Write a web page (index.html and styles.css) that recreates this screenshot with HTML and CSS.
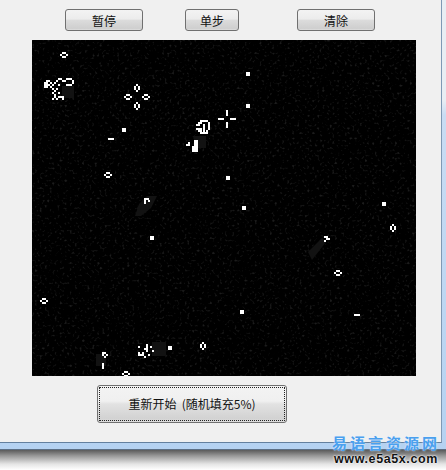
FILE: index.html
```html
<!DOCTYPE html>
<html lang="zh">
<head>
<meta charset="utf-8">
<title>生命游戏</title>
<link rel="stylesheet" href="styles.css">
</head>
<body>
<div class="frame">
  <main class="client">
    <div class="toolbar">
      <button class="btn btn-wide">暂停</button>
      <button class="btn btn-narrow">单步</button>
      <button class="btn btn-wide">清除</button>
    </div>
    <svg class="field" viewBox="32 40 384 336" width="384" height="336" xmlns="http://www.w3.org/2000/svg">
      <defs>
        <filter id="specks" x="0" y="0" width="100%" height="100%" color-interpolation-filters="sRGB">
          <feTurbulence type="fractalNoise" baseFrequency="0.4" numOctaves="1" seed="7"/>
          <feColorMatrix type="matrix" values="0 0 0 0 0.11  0 0 0 0 0.11  0 0 0 0 0.11  5 0 0 0 -2.9"/>
        </filter>
        <path id="hive-h" d="M2 0h4v2h-4zM0 2h2v2h-2zM6 2h2v2h-2zM2 4h4v2h-4z"/>
        <path id="hive-v" d="M2 0h2v2h-2zM0 2h2v4h-2zM4 2h2v4h-2zM2 6h2v2h-2z"/>
        <rect id="block" width="4" height="4"/>
      </defs>
      <rect x="32" y="40" width="384" height="336" fill="#000"/>
      <rect x="32" y="40" width="384" height="336" filter="url(#specks)"/>
      <g fill="#121212">
        <path d="M62 86h12v12h-12z"/>
        <path d="M139 204l8-8h10l-6 12-10 8h-6z"/>
        <path d="M308 252l14-14 4 4-14 18z"/>
        <path d="M96 354h10v12h-10z"/>
        <path d="M152 342h14v14h-14z"/>
        <path d="M194 136h12v12h-12z"/>
      </g>
      <g fill="#fff">
        <use href="#block" x="246" y="72"/>
        <use href="#block" x="246" y="104"/>
        <use href="#block" x="122" y="128"/>
        <use href="#block" x="226" y="176"/>
        <use href="#block" x="242" y="206"/>
        <use href="#block" x="150" y="236"/>
        <use href="#block" x="382" y="202"/>
        <use href="#block" x="240" y="310"/>
        <use href="#block" x="168" y="346"/>
        <use href="#hive-h" x="60" y="52"/>
        <use href="#hive-h" x="104" y="172"/>
        <use href="#hive-h" x="334" y="270"/>
        <use href="#hive-h" x="40" y="298"/>
        <use href="#hive-h" x="122" y="371"/>
        <use href="#hive-h" x="124" y="94"/>
        <use href="#hive-h" x="142" y="94"/>
        <use href="#hive-v" x="134" y="84"/>
        <use href="#hive-v" x="134" y="102"/>
        <use href="#hive-v" x="390" y="224"/>
        <use href="#hive-v" x="200" y="342"/>
        <path d="M108 138h6v2h-6zM354 314h6v2h-6zM102 363h2v6h-2z"/>
        <path d="M218 118h6v2h-6zM230 118h6v2h-6zM226 110h2v6h-2zM226 122h2v6h-2z"/>
        <path d="M144 198h5v2h-3v4h-2zM148 200h2v2h-2z"/>
        <path d="M324 236h4v2h-4zM326 238h4v2h-4zM324 240h2v2h-2z"/>
        <path d="M102 352h4v2h-4zM102 354h2v2h-2zM106 354h2v2h-2zM104 356h2v2h-2z"/>
        <path d="M44 82h4v6h-4zM46 80h4v2h-4zM48 84h2v2h-2zM50 82h2v2h-2zM52 84h2v2h-2zM50 86h2v2h-2zM54 82h2v2h-2z"/>
        <path d="M58 78h4v2h-4zM56 80h2v2h-2zM62 80h2v2h-2zM58 84h2v2h-2zM66 78h6v2h-6zM64 80h2v2h-2zM72 80h2v4h-2zM66 84h6v2h-6z"/>
        <path d="M52 88h2v2h-2zM54 90h2v2h-2zM56 88h2v2h-2zM58 92h2v2h-2zM52 92h2v2h-2zM54 94h2v4h-2zM52 98h2v2h-2zM58 96h6v2h-6zM56 98h2v2h-2zM62 98h2v2h-2z"/>
        <path d="M138 352h2v4h-2zM140 354h2v2h-2zM142 352h2v4h-2zM138 346h2v2h-2zM146 344h2v8h-2zM150 346h2v2h-2zM152 350h2v2h-2zM148 354h2v2h-2zM144 348h2v2h-2zM144 356h2v2h-2z"/>
        <path d="M200 120h8v2h-8zM198 122h4v2h-4zM208 122h2v8h-2zM196 124h4v2h-4zM203 124h2v8h-2zM196 128h6v2h-6zM198 130h4v2h-4zM200 134h8v-2h-8zM206 130h2v2h-2z"/>
        <path d="M192 146h6v6h-6zM194 140h4v6h-4zM186 144h4v2h-4zM188 142h2v2h-2z"/>
      </g>
    </svg>
    <button class="btn btn-restart"><span class="focus">重新开始 &nbsp;(随机填充5%)</span></button>
  </main>
</div>
<div class="drop-shadow"></div>
<div class="watermark">
  <div class="wm-cn">易语言资源网</div>
  <div class="wm-url">www.e5a5x.com</div>
</div>
</body>
</html>
```
FILE: styles.css
```css
* { box-sizing: border-box; }
html, body { margin: 0; padding: 0; }
body {
  position: relative;
  width: 446px;
  height: 470px;
  overflow: hidden;
  background: #fff;
  font-family: "Noto Sans CJK SC", "Liberation Sans", sans-serif;
}
.frame {
  height: 450px;
  padding: 0 4px 6px 0;
  background: linear-gradient(180deg, #e9eef3 0, #e9eef3 100px, #c9dcf3 115px, #b5d2f1 100%);
  border-bottom: 1px solid #5d6f84;
}
.client {
  height: 443px;
  padding-top: 9px;
  display: flex;
  flex-direction: column;
  align-items: flex-start;
  background: #f0f0f0;
  border-right: 1px solid #7f99b5;
  border-bottom: 1px solid #64809e;
}
.toolbar {
  display: flex;
  margin-left: 65px;
  height: 22px;
}
.btn {
  display: block;
  padding: 1px 0 0;
  border: 1px solid #707070;
  border-radius: 3px;
  color: #111;
  font-family: inherit;
  font-size: 12px;
  line-height: 1;
  background: linear-gradient(180deg, #f3f3f3 0, #ececec 46%, #dcdcdc 50%, #cfcfcf 92%, #dedede 100%);
}
.btn-wide { width: 78px; }
.btn-narrow { width: 54px; margin: 0 58px 0 42px; }
.field {
  display: block;
  margin: 9px 0 0 32px;
}
.btn-restart {
  width: 190px;
  height: 38px;
  margin: 9px 0 0 97px;
  padding: 1px;
  background: linear-gradient(180deg, #f3f3f3 0, #f0f0f0 42%, #e2e2e2 50%, #d2d2d2 90%, #dedede 100%);
}
.focus {
  display: flex;
  align-items: center;
  justify-content: center;
  height: 100%;
  border: 1px dotted #222;
  white-space: pre;
}
.drop-shadow {
  height: 20px;
  background: linear-gradient(180deg, #5a5a5a 0, #9a9a9a 30%, #e4e4e4 70%, #fff 100%);
}
.watermark {
  position: absolute;
  left: 331px;
  top: 435px;
  width: 110px;
  text-align: center;
}
.wm-cn {
  font-family: "Liberation Sans", "Noto Sans CJK SC", sans-serif;
  font-size: 15px;
  line-height: 17px;
  font-weight: 700;
  letter-spacing: 3px;
  white-space: nowrap;
  color: #4aa0ee;
  text-shadow: 0 0 2px #e6f2ff;
}
.wm-url {
  font-family: "Liberation Sans", sans-serif;
  font-size: 12.5px;
  line-height: 14px;
  font-weight: 700;
  letter-spacing: 0.6px;
  white-space: nowrap;
  color: #111;
  text-shadow: 0 0 2px #fff, 0 0 2px #fff;
}
```
